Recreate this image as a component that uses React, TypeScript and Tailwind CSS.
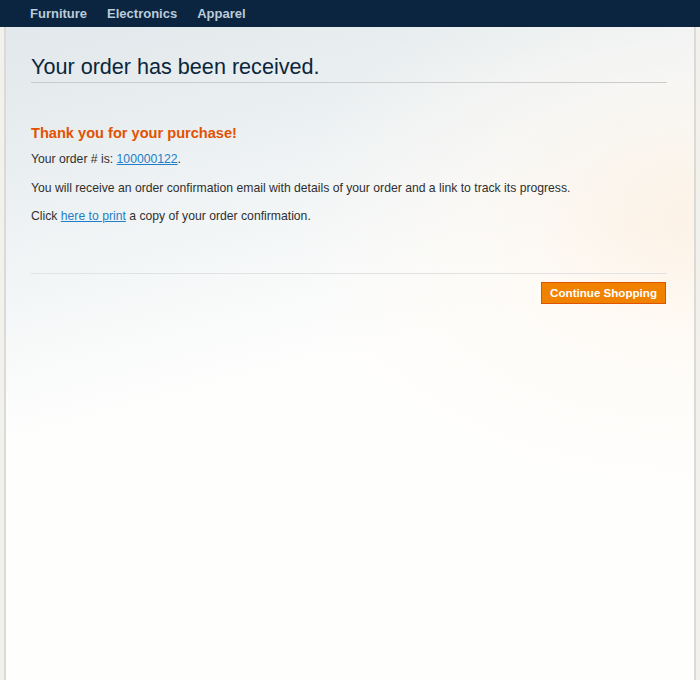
export default function App() {
  const navLinks = ["Furniture", "Electronics", "Apparel"];

  return (
    <div className="min-h-[680px] bg-[#f3f1ec] font-['Liberation_Sans',Arial,sans-serif]">
      {/* Top nav */}
      <nav className="h-[27px] bg-[#0b2540] flex items-center gap-5 pl-[30px]">
        {navLinks.map((name) => (
          <a key={name} href="#" className="text-[13px] font-bold text-[#bccbd9] leading-none">
            {name}
          </a>
        ))}
      </nav>

      {/* Main column */}
      <div className="mx-[4px] min-h-[653px] border-l-2 border-r-2 border-[#dcdad6] bg-[#fefefd] relative overflow-hidden">
        <div className="absolute inset-0 bg-[linear-gradient(165deg,#e2e8eb_0%,#e9eef0_16%,#f3f6f7_32%,rgba(255,255,255,0)_50%)]" />
        <div className="absolute inset-0 bg-[radial-gradient(ellipse_at_100%_30%,rgba(253,240,225,0.8)_0%,rgba(255,249,242,0.45)_22%,rgba(255,255,255,0)_42%)]" />
        <div className="relative pl-[25px] pr-[27px] pt-[26px]">
          <h1 className="text-[21.6px] leading-[28px] text-[#0a263c] border-b border-[#cccccc] pb-[1px]">
            Your order has been received.
          </h1>

          <h2 className="mt-[41px] text-[14.6px] font-bold text-[#e25203] leading-[18px]">
            Thank you for your purchase!
          </h2>
          <p className="mt-[10px] text-[12.2px] text-[#2f2f2f] leading-[15px]">
            Your order # is:{" "}
            <a href="#" className="text-[#1e7ec8] underline">
              100000122
            </a>
            .
          </p>
          <p className="mt-[14px] text-[12.2px] text-[#2f2f2f] leading-[15px]">
            You will receive an order confirmation email with details of your order and a link to track its progress.
          </p>
          <p className="mt-[13px] text-[12.2px] text-[#2f2f2f] leading-[15px]">
            Click{" "}
            <a href="#" className="text-[#1e7ec8] underline">
              here to print
            </a>{" "}
            a copy of your order confirmation.
          </p>

          <div className="mt-[49px] border-t border-[#e2e2e2] pt-[8px] flex justify-end pr-[1px]">
            <button className="h-[22px] px-[8px] bg-[#f18200] border border-[#de5400] text-white text-[11.6px] font-bold leading-none">
              Continue Shopping
            </button>
          </div>
        </div>
      </div>
    </div>
  );
}
